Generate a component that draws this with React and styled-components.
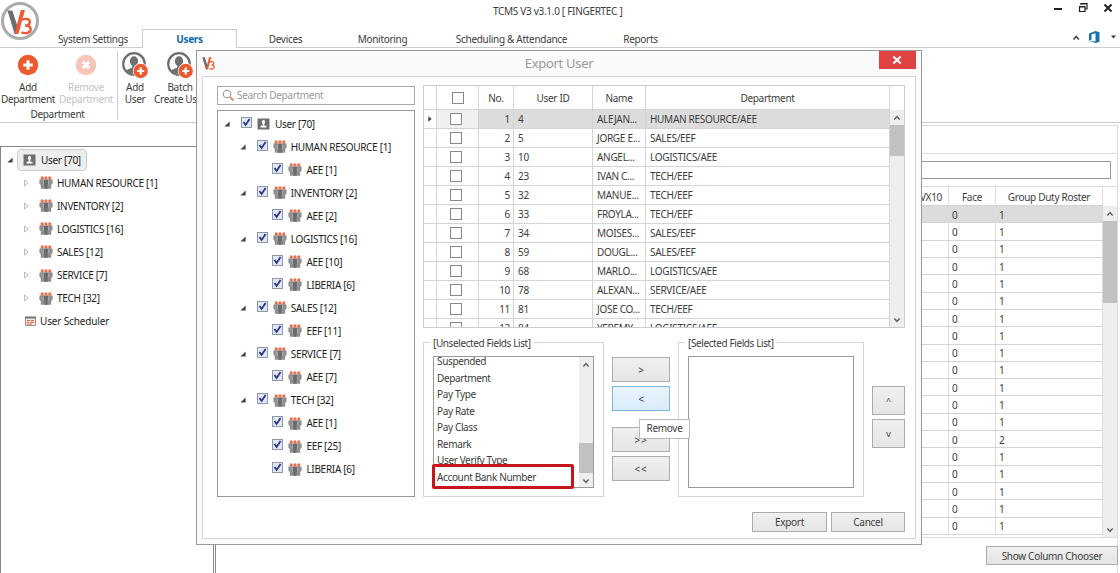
import React from 'react';
import styled, { createGlobalStyle } from 'styled-components';

const tabs = [
  { label: 'System Settings', width: 98 },
  { label: 'Users', width: 95, active: true },
  { label: 'Devices', width: 97 },
  { label: 'Monitoring', width: 97 },
  { label: 'Scheduling & Attendance', width: 161 },
  { label: 'Reports', width: 97 },
];

const departments = [
  'HUMAN RESOURCE [1]',
  'INVENTORY [2]',
  'LOGISTICS [16]',
  'SALES [12]',
  'SERVICE [7]',
  'TECH [32]',
];

const exportTree = [
  { level: 0, label: 'User [70]' },
  { level: 1, label: 'HUMAN RESOURCE [1]' },
  { level: 2, label: 'AEE [1]' },
  { level: 1, label: 'INVENTORY [2]' },
  { level: 2, label: 'AEE [2]' },
  { level: 1, label: 'LOGISTICS [16]' },
  { level: 2, label: 'AEE [10]' },
  { level: 2, label: 'LIBERIA [6]' },
  { level: 1, label: 'SALES [12]' },
  { level: 2, label: 'EEF [11]' },
  { level: 1, label: 'SERVICE [7]' },
  { level: 2, label: 'AEE [7]' },
  { level: 1, label: 'TECH [32]' },
  { level: 2, label: 'AEE [1]' },
  { level: 2, label: 'EEF [25]' },
  { level: 2, label: 'LIBERIA [6]' },
];

const users = [
  ['4', 'ALEJAN...', 'HUMAN RESOURCE/AEE'],
  ['5', 'JORGE E...', 'SALES/EEF'],
  ['10', 'ANGEL...', 'LOGISTICS/AEE'],
  ['23', 'IVAN C...', 'TECH/EEF'],
  ['32', 'MANUE...', 'TECH/EEF'],
  ['33', 'FROYLA...', 'TECH/EEF'],
  ['34', 'MOISES...', 'SALES/EEF'],
  ['59', 'DOUGL...', 'SALES/EEF'],
  ['68', 'MARLO...', 'LOGISTICS/AEE'],
  ['78', 'ALEXAN...', 'SERVICE/AEE'],
  ['81', 'JOSE CO...', 'TECH/EEF'],
  ['84', 'YEREMY...', 'LOGISTICS/AEE'],
];

const rosters = [1, 1, 1, 1, 1, 1, 1, 1, 1, 1, 1, 1, 1, 2, 1, 1, 1, 1, 1];

const fields = [
  'Suspended',
  'Department',
  'Pay Type',
  'Pay Rate',
  'Pay Class',
  'Remark',
  'User Verify Type',
  'Account Bank Number',
];

const V3Mark = ({ size }) => (
  <svg width={size} height={size} viewBox="0 0 26 26" fill="none">
    <path d="M.5 2.500h4.600L10 17l-1.500 8H7.300z" fill="#6a6d70" />
    <path d="M13.300 2h4L11 25H7.200z" fill="#ee5a34" />
    <path
      d="M14.800 11.500c1.800-1.400 7.200-1.700 7.200 1.900 0 2.300-2 3.400-4.600 3.500 3 0 5.400 1.100 5.400 3.600 0 4-6 4.400-9 2.800"
      stroke="#ee5a34"
      strokeWidth="2.300"
    />
  </svg>
);

const GroupIcon = () => (
  <svg width="14" height="13" viewBox="0 0 14 13">
    <path d="M.4 4.300q0-1.100 1.100-1.100h11q1.100 0 1.100 1.100v3.500l-1.400 1.300v3.600H1.800V9.100L.4 7.800z" fill="#8d8f91" />
    <path d="M4.700 4h4.600v4l-.8.800v3.900h-3V8.800L4.700 8z" fill="#696c6e" />
    <path d="M4.300 4.500v4M9.700 4.500v4" stroke="#d0d0d0" strokeWidth=".6" />
    <g fill="#ee6d47">
      <circle cx="3.200" cy="1.900" r="1.600" />
      <circle cx="7" cy="1.900" r="1.600" />
      <circle cx="10.800" cy="1.900" r="1.600" />
    </g>
  </svg>
);

const PersonIcon = () => (
  <svg width="13" height="12" viewBox="0 0 13 12">
    <path d="M.5.5h12v11H.5z" fill="#6d6f71" />
    <ellipse cx="6.500" cy="4.100" rx="1.600" ry="2" fill="#fff" />
    <path d="M5.700 5h1.600v2.500l2.200.5v1.500h-6V8l2.200-.5z" fill="#fff" />
  </svg>
);

const SchedulerIcon = () => (
  <svg width="11" height="11" viewBox="0 0 11 11">
    <path d="M.5 1.500h10v8H.5z" fill="#fbe9e3" stroke="#a98b82" />
    <path d="M0 .5h11v2H0z" fill="#77706e" />
    <path d="M2 4.500h3M6 4.500h3M2 6.300h2M5 6.300h4M2 8h5" stroke="#e2674a" />
  </svg>
);

const CircleIcon = ({ remove }) => (
  <svg width="22" height="22" viewBox="0 0 22 22">
    <circle cx="11" cy="11" r="10.200" fill={remove ? '#f7c4b8' : '#ec5a2f'} />
    <path
      d={remove ? 'M7.800 7.800l6.400 6.400M14.200 7.800l-6.400 6.400' : 'M11 6.300v9.400M6.300 11h9.400'}
      stroke="#fff"
      strokeWidth="3"
    />
  </svg>
);

const UserAddIcon = () => (
  <svg width="27" height="27" viewBox="0 0 27 27">
    <circle cx="12" cy="12" r="10.800" fill="#fff" stroke="#6d7073" strokeWidth="2.200" />
    <ellipse cx="12" cy="9.300" rx="4.100" ry="5" fill="#6d7073" />
    <path d="M4 19.500c1-3 6-3.200 6.300-4.300v-3h3.600v3c.5 1.100 4 1.500 6 3.300L14 23z" fill="#6d7073" />
    <circle cx="18.700" cy="19" r="7.900" fill="#fff" />
    <circle cx="18.700" cy="19" r="7.200" fill="#ec5a2f" />
    <path d="M18.700 15.500v7M15.200 19h7" stroke="#fff" strokeWidth="2.200" />
  </svg>
);

const Chevron = ({ down }) => (
  <svg width="8" height="6" viewBox="0 0 8 6" fill="none">
    <path d={down ? 'M1.300 1.500L4 4.300l2.700-2.800' : 'M1.300 4.500L4 1.700l2.700 2.800'} stroke="#666" strokeWidth="1.500" />
  </svg>
);

const Expander = () => (
  <svg width="6" height="6" viewBox="0 0 6 6">
    <path d="M5.600.4v5.200H.4z" fill="#444" />
  </svg>
);

const ClosedArrow = () => (
  <svg width="5" height="8" viewBox="0 0 5 8">
    <path d="M.5 1v6L4 4z" fill="#fff" stroke="#aaa" strokeWidth=".8" />
  </svg>
);

const Scrollbar = ({ width, before, thumb }) => (
  <Track $width={width}>
    <ScrollArrow>
      <Chevron />
    </ScrollArrow>
    <Thumb $before={before} $size={thumb} />
    <Filler />
    <ScrollArrow>
      <Chevron down />
    </ScrollArrow>
  </Track>
);

const TreeCheck = () => (
  <CheckSquare>
    <svg width="9" height="9" viewBox="0 0 9 9" fill="none">
      <path d="M1.500 4l2.100 3L7.600 1" stroke="#26348b" strokeWidth="1.800" />
    </svg>
  </CheckSquare>
);

const MainHeader = () => (
  <Header>
    <LogoRing>
      <V3Mark size={27} />
    </LogoRing>
    <HeaderMain>
      <TitleBar>
        <AppTitle>TCMS V3 v3.1.0 [ FINGERTEC ]</AppTitle>
        <WindowControls>
          <svg width="64" height="14" viewBox="0 0 64 14" fill="none" stroke="#222">
            <path d="M1 8h8" strokeWidth="2" />
            <path d="M28 4V2.500h6V8h-2M28 3h6" strokeWidth="1.200" />
            <path d="M26.500 5.500H32v5h-5.500zM26.500 6H32" strokeWidth="1.200" />
            <path d="M51.500 3.500l7 7M58.500 3.500l-7 7" strokeWidth="2" />
          </svg>
        </WindowControls>
      </TitleBar>
      <TabRow>
        {tabs.map((tab) => (
          <Tab key={tab.label} $width={tab.width} $active={tab.active}>
            {tab.label}
          </Tab>
        ))}
        <TabTools>
          <svg width="46" height="14" viewBox="0 0 46 14" fill="none">
            <path d="M2.500 9.500l2.700-3 2.700 3" stroke="#444" strokeWidth="1.600" />
            <path d="M18 3.500L24.500 1l4 1.200v9.600l-4 1.200-6.500-2.300 6.500.7V3.300l-4 1v5.400l-2.500 1z" fill="#1a70b0" />
            <path d="M40 5.500h5l-2.500 3z" fill="#333" />
          </svg>
        </TabTools>
      </TabRow>
    </HeaderMain>
  </Header>
);

const MainRibbon = () => (
  <Ribbon>
    <RibbonGroup>
      <RibbonItems>
        <RibbonButton $width={56}>
          <RibbonIcon>
            <CircleIcon />
          </RibbonIcon>
          <span>Add</span>
          <span>Department</span>
        </RibbonButton>
        <RibbonButton $width={60} $disabled>
          <RibbonIcon>
            <CircleIcon remove />
          </RibbonIcon>
          <span>Remove</span>
          <span>Department</span>
        </RibbonButton>
      </RibbonItems>
      <RibbonLabel>Department</RibbonLabel>
    </RibbonGroup>
    <RibbonItems>
      <RibbonButton $width={34}>
        <RibbonIcon>
          <UserAddIcon />
        </RibbonIcon>
        <span>Add</span>
        <span>User</span>
      </RibbonButton>
      <RibbonButton $width={56}>
        <RibbonIcon>
          <UserAddIcon />
        </RibbonIcon>
        <span>Batch</span>
        <span>Create User</span>
      </RibbonButton>
    </RibbonItems>
  </Ribbon>
);

const Sidebar = () => (
  <SidePanel>
    <SideRow>
      <SideArrow $root>
        <Expander />
      </SideArrow>
      <SelectedNode>
        <PersonIcon />
        User [70]
      </SelectedNode>
    </SideRow>
    {departments.map((name) => (
      <SideRow key={name}>
        <SideArrow>
          <ClosedArrow />
        </SideArrow>
        <GroupIcon />
        <NodeLabel>{name}</NodeLabel>
      </SideRow>
    ))}
    <SideRow>
      <SchedulerSlot>
        <SchedulerIcon />
      </SchedulerSlot>
      <LooseText>User Scheduler</LooseText>
    </SideRow>
  </SidePanel>
);

const Roster = () => (
  <RosterPanel>
    <RosterHeading />
    <RosterSearch />
    <RosterTable>
      <RosterGrid>
        <RosterRow $head>
          <RosterCell $end>VX10</RosterCell>
          <RosterCell $center>Face</RosterCell>
          <RosterCell $center>Group Duty Roster</RosterCell>
        </RosterRow>
        {rosters.map((value, index) => (
          <RosterRow key={index} $selected={index === 0}>
            <RosterCell />
            <RosterCell>0</RosterCell>
            <RosterCell>{value}</RosterCell>
          </RosterRow>
        ))}
      </RosterGrid>
      <ScrollColumn $head={19} $width={14}>
        <Scrollbar width={14} before={0} thumb={82} />
      </ScrollColumn>
    </RosterTable>
    <RosterFooter>
      <Button $width={132} $height={19}>
        Show Column Chooser
      </Button>
    </RosterFooter>
  </RosterPanel>
);

const DepartmentPicker = () => (
  <PickerColumn>
    <SearchBox>
      <svg width="13" height="13" viewBox="0 0 13 13" fill="none">
        <circle cx="5" cy="5" r="3.800" stroke="#999" strokeWidth="1.100" />
        <path d="M8 8l3.500 3.500" stroke="#e58b72" strokeWidth="1.800" />
      </svg>
      Search Department
    </SearchBox>
    <TreeBox>
      {exportTree.map((node, index) => (
        <TreeRow key={index} $level={node.level}>
          <TreeArrow>{node.level < 2 && <Expander />}</TreeArrow>
          <TreeCheck />
          <TreeIcon>{node.level === 0 ? <PersonIcon /> : <GroupIcon />}</TreeIcon>
          {node.label}
        </TreeRow>
      ))}
    </TreeBox>
  </PickerColumn>
);

const UserTable = () => (
  <TableFrame>
    <UserGrid>
      <UserRow $head>
        <UserCell />
        <UserCell $center>
          <EmptyCheck />
        </UserCell>
        <UserCell $center>No.</UserCell>
        <UserCell $center>User ID</UserCell>
        <UserCell $center>Name</UserCell>
        <UserCell $center>Department</UserCell>
      </UserRow>
      {users.map(([id, name, department], index) => (
        <UserRow key={id} $selected={index === 0}>
          <UserCell $center>
            {index === 0 && (
              <svg width="4" height="6" viewBox="0 0 4 6">
                <path d="M.3.300v5.400L3.700 3z" fill="#444" />
              </svg>
            )}
          </UserCell>
          <UserCell $check>
            <EmptyCheck />
          </UserCell>
          <UserCell $end>{index + 1}</UserCell>
          <UserCell>{id}</UserCell>
          <UserCell>{name}</UserCell>
          <UserCell>{department}</UserCell>
        </UserRow>
      ))}
    </UserGrid>
    <ScrollColumn $head={24} $width={15}>
      <Scrollbar width={14} before={0} thumb={31} />
    </ScrollColumn>
  </TableFrame>
);

const FieldChooser = () => (
  <ChooserRow>
    <FieldGroup $width={181}>
      <Legend>[Unselected Fields List]</Legend>
      <ListBox>
        <ListItems>
          {fields.map((field) => (
            <ListItem key={field}>{field}</ListItem>
          ))}
        </ListItems>
        <Scrollbar width={14} before={71} thumb={30} />
      </ListBox>
      <Highlight />
    </FieldGroup>
    <MoveButtons>
      <Button $width={58} $height={25}>
        &gt;
      </Button>
      <Button $width={58} $height={25} $hover>
        &lt;
      </Button>
      <ButtonGap />
      <Button $width={58} $height={25} $wide>
        &gt;&gt;
      </Button>
      <Button $width={58} $height={25} $wide>
        &lt;&lt;
      </Button>
      <Tooltip>Remove</Tooltip>
    </MoveButtons>
    <FieldGroup $width={186}>
      <Legend>[Selected Fields List]</Legend>
      <ListBox />
    </FieldGroup>
    <OrderButtons>
      <Button $width={33} $height={29} $small>
        ^
      </Button>
      <Button $width={33} $height={29} $small>
        v
      </Button>
    </OrderButtons>
  </ChooserRow>
);

const ExportDialog = () => (
  <Dialog>
    <DialogBar>
      <V3Mark size={14} />
      <DialogTitle>Export User</DialogTitle>
      <CloseButton>
        <svg width="10" height="10" viewBox="0 0 10 10">
          <path d="M1.300 1.500l7.400 7M8.700 1.500l-7.400 7" stroke="#fff" strokeWidth="2" />
        </svg>
      </CloseButton>
    </DialogBar>
    <DialogBody>
      <DepartmentPicker />
      <ExportColumn>
        <UserTable />
        <FieldChooser />
        <DialogFooter>
          <Button $width={75} $height={20}>
            Export
          </Button>
          <Button $width={74} $height={20}>
            Cancel
          </Button>
        </DialogFooter>
      </ExportColumn>
    </DialogBody>
  </Dialog>
);

const App = () => (
  <>
    <GlobalStyle />
    <Window>
      <MainHeader />
      <MainRibbon />
      <Workspace>
        <Sidebar />
        <Roster />
      </Workspace>
      <ExportDialog />
    </Window>
  </>
);

const GlobalStyle = createGlobalStyle`
  * {
    box-sizing: border-box;
  }
  body {
    margin: 0;
    background: #fff;
    color: #3c3c3c;
    font: 10px/14px 'Noto Sans', 'Open Sans', sans-serif;
    letter-spacing: -0.3px;
  }
  svg {
    display: block;
    flex: none;
  }
`;

const Window = styled.div`
  position: relative;
  display: flex;
  flex-direction: column;
  width: 1120px;
  height: 573px;
  overflow: hidden;
  background: #fff;
`;
const Header = styled.header`
  display: flex;
  height: 48px;
  flex: none;
  border-bottom: 1px solid #ccc;
`;
const LogoRing = styled.div`
  display: flex;
  align-items: center;
  justify-content: center;
  width: 38px;
  height: 38px;
  margin: 2px 5px 0 1px;
  border: 3px solid #a9abad;
  border-radius: 50%;
`;
const HeaderMain = styled.div`
  flex: 1;
`;
const TitleBar = styled.div`
  display: flex;
  justify-content: space-between;
  height: 29px;
`;
const AppTitle = styled.div`
  padding: 4px 0 0 449px;
  white-space: nowrap;
`;
const WindowControls = styled.div`
  padding: 1px 3px 0 0;
`;
const TabRow = styled.nav`
  display: flex;
  height: 19px;
`;
const Tab = styled.div`
  width: ${({ $width }) => $width}px;
  height: ${({ $active }) => ($active ? 19 : 18)}px;
  padding-top: 3px;
  text-align: center;
  ${({ $active }) =>
    $active &&
    `
    padding-top: 2px;
    border: 1px solid #ccc;
    border-bottom: 0;
    background: #fff;
    color: #0a6aad;
    font-weight: 700;
  `}
`;
const TabTools = styled.div`
  margin-left: auto;
  padding: 1px 3px 0 0;
`;
const Ribbon = styled.section`
  display: flex;
  height: 75px;
  flex: none;
  border-bottom: 1px solid #ccc;
`;
const RibbonGroup = styled.div`
  width: 118px;
  height: 68px;
  margin-top: 3px;
  border-right: 1px solid #ccc;
`;
const RibbonItems = styled.div`
  display: flex;
  ${RibbonGroup} & {
    margin-top: -3px;
  }
`;
const RibbonButton = styled.div`
  display: flex;
  flex-direction: column;
  align-items: center;
  width: ${({ $width }) => $width}px;
  color: ${({ $disabled }) => ($disabled ? '#c4c4c4' : '#3c3c3c')};
  line-height: 11.5px;
  white-space: nowrap;
`;
const RibbonIcon = styled.div`
  display: flex;
  align-items: center;
  height: 34px;
`;
const RibbonLabel = styled.div`
  margin-top: 2px;
  padding-right: 2px;
  text-align: center;
`;
const Workspace = styled.main`
  display: flex;
  flex: 1;
  min-height: 0;
`;
const SidePanel = styled.aside`
  width: 214px;
  margin-top: 23px;
  padding-top: 1px;
  border: 1px solid #888;
  border-bottom: 0;
  color: #1c1c1c;
`;
const SideRow = styled.div`
  display: flex;
  align-items: center;
  height: 23.1px;
`;
const SideArrow = styled.div`
  width: ${({ $root }) => ($root ? 10 : 32)}px;
  margin-left: 6px;
  padding-left: ${({ $root }) => ($root ? 0 : 17)}px;
`;
const SelectedNode = styled.div`
  display: flex;
  align-items: center;
  gap: 5px;
  height: 22px;
  padding: 0 5px;
  border: 1px solid #ccc;
  border-radius: 4px;
  background: #eee;
`;
const NodeLabel = styled.div`
  margin-left: 4px;
`;
const LooseText = styled.div`
  letter-spacing: -0.15px;
  margin-left: -1px;
`;
const SchedulerSlot = styled.div`
  width: 40px;
  padding-left: 24px;
`;
const RosterPanel = styled.section`
  display: flex;
  flex-direction: column;
  flex: 1;
  margin: 2px 2px 0 1px;
  border: 1px solid #ddd;
  border-left-color: #888;
  border-bottom: 0;
`;
const RosterHeading = styled.div`
  height: 28px;
  flex: none;
  border-bottom: 1px solid #ddd;
`;
const RosterSearch = styled.div`
  height: 18px;
  margin: 7px 6px 7px 5px;
  flex: none;
  border: 1px solid #999;
`;
const RosterTable = styled.div`
  display: flex;
  height: 352px;
  border: 1px solid #ddd;
  border-width: 1px 0;
`;
const RosterGrid = styled.div`
  flex: 1;
  overflow: hidden;
`;
const RosterRow = styled.div`
  display: grid;
  grid-template-columns: 1fr 47px 107px;
  height: ${({ $head }) => ($head ? 19 : 17.32)}px;
  border-bottom: 1px solid #d4d4d4;
  background: ${({ $selected }) => ($selected ? '#dcdcdc' : '#fff')};
`;
const RosterCell = styled.div`
  display: flex;
  align-items: center;
  justify-content: ${({ $center, $end }) => ($center ? 'center' : $end ? 'flex-end' : 'flex-start')};
  padding: 1px ${({ $end }) => ($end ? 6 : 3)}px 0;
  border-right: 1px solid #ddd;
`;
const RosterFooter = styled.div`
  display: flex;
  justify-content: flex-end;
  padding-top: 8px;
  margin-right: -1px;
`;
const ScrollColumn = styled.div`
  display: flex;
  width: ${({ $width }) => $width}px;
  padding-top: ${({ $head }) => $head}px;
`;
const Track = styled.div`
  display: flex;
  flex-direction: column;
  width: ${({ $width }) => $width}px;
  background: #eee;
`;
const ScrollArrow = styled.div`
  display: flex;
  align-items: center;
  justify-content: center;
  height: 15px;
  flex: none;
`;
const Thumb = styled.div`
  height: ${({ $size }) => $size}px;
  margin-top: ${({ $before }) => $before}px;
  flex: none;
  background: #c1c1c1;
`;
const Filler = styled.div`
  flex: 1;
`;
const Button = styled.button`
  width: ${({ $width }) => $width}px;
  height: ${({ $height }) => $height}px;
  padding: 0;
  border: 1px solid ${({ $hover }) => ($hover ? '#7eb4e2' : '#acacac')};
  background: ${({ $hover }) =>
    $hover ? 'linear-gradient(#e9f4fd, #d9ebfb)' : 'linear-gradient(#f0f0f0, #e5e5e5)'};
  color: #3c3c3c;
  font: inherit;
  font-size: ${({ $small }) => ($small ? 9 : 10)}px;
  letter-spacing: ${({ $wide }) => ($wide ? 0.8 : -0.3)}px;
  line-height: 1;
`;
const Dialog = styled.div`
  position: absolute;
  top: 50px;
  left: 196px;
  width: 726px;
  height: 495px;
  padding: 0 5px 5px;
  border: 1px solid #999;
  background: #fafafa;
`;
const DialogBar = styled.div`
  display: flex;
  align-items: flex-start;
  justify-content: space-between;
  height: 25px;
  > svg {
    margin-top: 5px;
  }
`;
const DialogTitle = styled.div`
  padding: 3px 0 0 23px;
  color: #999;
  font-size: 13px;
  line-height: 18px;
`;
const CloseButton = styled.div`
  display: flex;
  align-items: center;
  justify-content: center;
  width: 37px;
  height: 18px;
  background: #e04343;
`;
const DialogBody = styled.div`
  display: flex;
  gap: 8px;
  height: 463px;
  padding: 9px 9px 0 14px;
  border: 1px solid #d5d5d5;
  background: #fff;
`;
const PickerColumn = styled.div`
  width: 198px;
`;
const SearchBox = styled.div`
  display: flex;
  align-items: center;
  gap: 2px;
  height: 19px;
  padding: 0 0 1px 4px;
  border: 1px solid #aaa;
  color: #999;
`;
const TreeBox = styled.div`
  height: 387px;
  margin-top: 5px;
  padding-top: 1px;
  border: 1px solid #999;
  color: #1c1c1c;
`;
const TreeRow = styled.div`
  display: flex;
  align-items: center;
  height: 23.06px;
  padding-left: ${({ $level }) => 6 + $level * 15.7}px;
`;
const TreeArrow = styled.div`
  width: 17px;
`;
const CheckSquare = styled.div`
  width: 11px;
  height: 11px;
  margin-top: -3px;
  border: 1px solid #8e98ad;
  background: #e3e6f3;
`;
const TreeIcon = styled.div`
  width: 18px;
  margin-left: 5px;
`;
const ExportColumn = styled.div`
  width: 482px;
`;
const TableFrame = styled.div`
  display: flex;
  height: 243px;
  margin-top: -1px;
  border: 1px solid #ccc;
`;
const UserGrid = styled.div`
  width: 466px;
  flex: none;
  overflow: hidden;
`;
const UserRow = styled.div`
  display: grid;
  grid-template-columns: 13px 42px 35px 79px 53px 244px;
  height: ${({ $head }) => ($head ? 24 : 19)}px;
  border-bottom: 1px solid #d5d5d5;
  background: ${({ $selected }) =>
    $selected ? 'linear-gradient(90deg, #fff 13px, #f0f0f0 13px, #f0f0f0 55px, #dcdcdc 55px)' : '#fff'};
`;
const UserCell = styled.div`
  display: flex;
  align-items: center;
  justify-content: ${({ $center, $end }) => ($center ? 'center' : $end ? 'flex-end' : 'flex-start')};
  min-width: 0;
  padding: 0 ${({ $end }) => ($end ? 3 : 0)}px 0 ${({ $check, $center }) => ($check ? 13 : $center ? 0 : 4)}px;
  border-right: 1px solid #d5d5d5;
  white-space: nowrap;
`;
const EmptyCheck = styled.div`
  width: 12px;
  height: 12px;
  flex: none;
  border: 1px solid #888;
  background: #fff;
`;
const ChooserRow = styled.div`
  display: flex;
  margin-top: 14px;
  gap: 8px;
`;
const FieldGroup = styled.div`
  position: relative;
  width: ${({ $width }) => $width}px;
  height: 155px;
  padding: 13px 9px 0;
  border: 1px solid #d5d5d5;
`;
const Legend = styled.div`
  width: fit-content;
  margin: -20px 0 6px -3px;
  padding: 0 3px;
  background: #fff;
  letter-spacing: -0.4px;
`;
const ListBox = styled.div`
  display: flex;
  height: 132px;
  border: 1px solid #999;
`;
const ListItems = styled.div`
  flex: 1;
  padding-left: 3px;
  margin-top: -4px;
  letter-spacing: -0.36px;
`;
const ListItem = styled.div`
  height: 16.5px;
  line-height: 16.5px;
`;
const Highlight = styled.div`
  position: absolute;
  top: 121px;
  left: 8px;
  width: 142px;
  height: 25px;
  border: 3px solid #c4161c;
  border-radius: 2px;
`;
const MoveButtons = styled.div`
  position: relative;
  display: flex;
  flex-direction: column;
  gap: 4px;
  padding-top: 15px;
`;
const ButtonGap = styled.div`
  height: 8px;
`;
const Tooltip = styled.div`
  position: absolute;
  z-index: 1;
  top: 77px;
  left: 27px;
  width: 51px;
  height: 20px;
  border: 1px solid #bbb;
  background: #fff;
  line-height: 17px;
  text-align: center;
`;
const OrderButtons = styled.div`
  display: flex;
  flex-direction: column;
  gap: 4px;
  padding-top: 44px;
`;
const DialogFooter = styled.div`
  display: flex;
  justify-content: flex-end;
  gap: 4px;
  margin-top: 15px;
`;

export default App;
